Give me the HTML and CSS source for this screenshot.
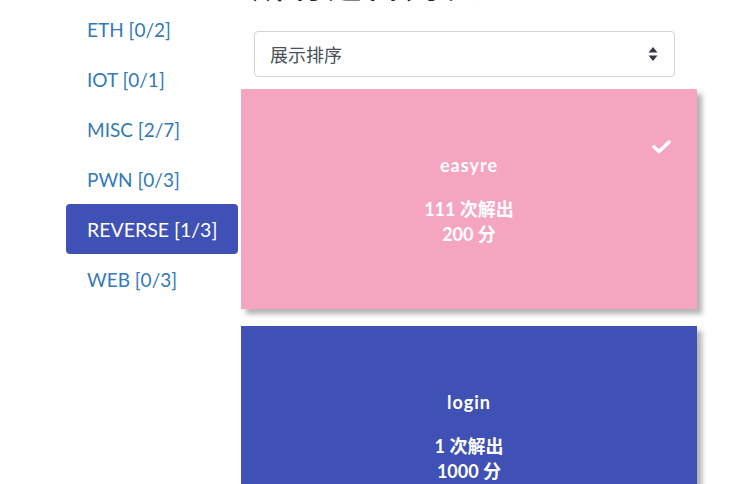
FILE: index.html
```html
<!DOCTYPE html>
<html lang="zh">
<head>
<meta charset="utf-8">
<link rel="stylesheet" href="styles.css">
</head>
<body>
<div class="page">
  <nav class="sidebar">
    <a class="nav-item">ETH [0/2]</a>
    <a class="nav-item">IOT [0/1]</a>
    <a class="nav-item">MISC [2/7]</a>
    <a class="nav-item">PWN [0/3]</a>
    <a class="nav-item active">REVERSE [1/3]</a>
    <a class="nav-item">WEB [0/3]</a>
  </nav>
  <main class="content">
    <h2 class="title">所有题目列表</h2>
    <div class="select">
      <span>展示排序</span>
      <svg class="arrows" width="10" height="16" viewBox="0 0 10 16"><path d="M5 1 L9.5 6.5 H0.5 Z M5 15 L0.5 9.5 H9.5 Z" fill="#343a40"/></svg>
    </div>
    <div class="card pink">
      <svg class="check" width="19" height="15" viewBox="0 0 19 15"><polyline points="2,8 7,12.5 17,3" fill="none" stroke="#fff" stroke-width="3.6" stroke-linecap="round" stroke-linejoin="round"/></svg>
      <div class="name">easyre</div>
      <div class="stats">111 次解出<br>200 分</div>
    </div>
    <div class="card blue">
      <div class="name">login</div>
      <div class="stats">1 次解出<br>1000 分</div>
    </div>
  </main>
</div>
</body>
</html>
```

FILE: styles.css
```css
html, body {
  margin: 0;
  padding: 0;
  background: #fff;
  overflow: hidden;
  height: 484px;
}
body {
  font-family: Lato, "Noto Sans CJK SC", sans-serif;
}
.page {
  display: flex;
  padding-left: 66px;
  gap: 3px;
}
.sidebar {
  width: 172px;
  display: flex;
  flex-direction: column;
  padding-top: 4px;
}
.nav-item {
  display: flex;
  align-items: center;
  height: 50px;
  padding-left: 21px;
  font-size: 19px;
  color: #337ab7;
  border-radius: 4px;
  box-sizing: border-box;
}
.nav-item.active {
  background: #3f51b5;
  color: #fff;
  font-size: 19.5px;
}
.content {
  width: 456px;
  display: flex;
  flex-direction: column;
}
.title {
  margin: -34px 0 0 11px;
  height: 36px;
  font-size: 34px;
  line-height: 36px;
  font-weight: 500;
  color: #222;
  font-family: "Noto Sans CJK SC", sans-serif;
  letter-spacing: 4px;
}
.select {
  margin: 29px 22px 0 13px;
  height: 46px;
  box-sizing: border-box;
  border: 1px solid #ced4da;
  border-radius: 4px;
  display: flex;
  align-items: center;
  justify-content: space-between;
  padding: 0 16px 0 15px;
  font-size: 18px;
  color: #495057;
  font-family: "Noto Sans CJK SC", sans-serif;
}
.arrows {
  display: block;
}
.card {
  position: relative;
  margin-top: 12px;
  height: 220px;
  box-sizing: border-box;
  padding-top: 4px;
  display: flex;
  flex-direction: column;
  align-items: center;
  justify-content: center;
  color: #fff;
  font-weight: 700;
  box-shadow: 5px 5px 5px rgba(0, 0, 0, 0.3);
}
.card + .card {
  margin-top: 17px;
}
.pink {
  background: #f5a5c0;
}
.blue {
  background: #3f51b5;
}
.check {
  position: absolute;
  top: 50px;
  left: 411px;
}
.name {
  font-size: 18px;
  letter-spacing: 1px;
  line-height: 20px;
  margin-bottom: 22.5px;
}
.stats {
  font-size: 18px;
  line-height: 25px;
  text-align: center;
}
```
